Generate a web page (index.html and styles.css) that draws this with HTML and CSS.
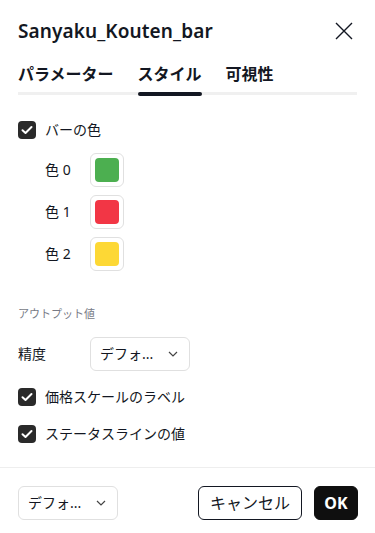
FILE: index.html
```html
<!DOCTYPE html>
<html lang="ja">
<head>
<meta charset="utf-8">
<title>Sanyaku_Kouten_bar</title>
<link rel="stylesheet" href="styles.css">
</head>
<body>
<div class="dialog">
  <header class="header">
    <h1 class="title">Sanyaku_Kouten_bar</h1>
    <button class="close" aria-label="閉じる">
      <svg width="18" height="18" viewBox="0 0 18 18"><path d="M1 1L17 17M17 1L1 17" stroke="#131722" stroke-width="1.4" fill="none"/></svg>
    </button>
  </header>
  <nav class="tabs">
    <div class="tab">パラメーター</div>
    <div class="tab active">スタイル</div>
    <div class="tab">可視性</div>
  </nav>
  <main class="content">
    <label class="check-row first">
      <span class="checkbox"><svg width="12" height="10" viewBox="0 0 12 10"><path d="M1.5 5.2L4.5 8L10.5 2" stroke="#fff" stroke-width="2" fill="none" stroke-linecap="round" stroke-linejoin="round"/></svg></span>
      <span class="label">バーの色</span>
    </label>
    <div class="color-rows">
      <div class="color-row"><span class="color-label">色 0</span><span class="swatch"><span class="swatch-fill green"></span></span></div>
      <div class="color-row"><span class="color-label">色 1</span><span class="swatch"><span class="swatch-fill red"></span></span></div>
      <div class="color-row"><span class="color-label">色 2</span><span class="swatch"><span class="swatch-fill yellow"></span></span></div>
    </div>
    <div class="section-title">アウトプット値</div>
    <div class="field-row">
      <span class="field-label">精度</span>
      <div class="select">
        <span class="select-text">デフォ...</span>
        <svg class="chev" width="10" height="6" viewBox="0 0 10 6"><path d="M1 1L5 5L9 1" stroke="#444" stroke-width="1.2" fill="none"/></svg>
      </div>
    </div>
    <label class="check-row second">
      <span class="checkbox"><svg width="12" height="10" viewBox="0 0 12 10"><path d="M1.5 5.2L4.5 8L10.5 2" stroke="#fff" stroke-width="2" fill="none" stroke-linecap="round" stroke-linejoin="round"/></svg></span>
      <span class="label">価格スケールのラベル</span>
    </label>
    <label class="check-row third">
      <span class="checkbox"><svg width="12" height="10" viewBox="0 0 12 10"><path d="M1.5 5.2L4.5 8L10.5 2" stroke="#fff" stroke-width="2" fill="none" stroke-linecap="round" stroke-linejoin="round"/></svg></span>
      <span class="label">ステータスラインの値</span>
    </label>
  </main>
  <footer class="footer">
    <div class="select">
      <span class="select-text">デフォ...</span>
      <svg class="chev" width="10" height="6" viewBox="0 0 10 6"><path d="M1 1L5 5L9 1" stroke="#444" stroke-width="1.2" fill="none"/></svg>
    </div>
    <div class="buttons">
      <button class="btn cancel">キャンセル</button>
      <button class="btn ok">OK</button>
    </div>
  </footer>
</div>
</body>
</html>
```

FILE: styles.css
```css
* { box-sizing: border-box; }
html, body { margin: 0; padding: 0; background: #fff; }
body {
  font-family: "Noto Sans", "Noto Sans CJK JP", sans-serif;
  color: #131722;
  width: 375px;
  height: 533px;
  overflow: hidden;
}
.dialog { display: flex; flex-direction: column; height: 533px; }
.header {
  height: 62px;
  display: flex;
  align-items: center;
  justify-content: space-between;
  padding: 0 22px 0 18px;
}
.title {
  margin: 0;
  font-size: 19px;
  font-weight: 600;
  line-height: 24px;
  letter-spacing: 0.1px;
}
.close {
  border: 0;
  background: none;
  padding: 0;
  width: 18px;
  height: 18px;
  display: flex;
}
.tabs {
  margin: 0 18px;
  display: flex;
  gap: 24px;
  border-bottom: 3px solid #f0f0f0;
}
.tab {
  position: relative;
  font-size: 16px;
  font-weight: 700;
  line-height: 24px;
  padding-bottom: 6px;
}
.tab.active::after {
  content: "";
  position: absolute;
  left: 0;
  right: 0;
  bottom: -4px;
  height: 4px;
  border-radius: 2px;
  background: #131722;
}
.content {
  padding: 18px 18px 0;
  display: flex;
  flex-direction: column;
}
.check-row {
  display: flex;
  align-items: center;
  gap: 9px;
}
.check-row.first { height: 34px; }
.check-row.second { height: 28px; margin-top: 12px; }
.check-row.third { height: 28px; margin-top: 9px; }
.checkbox {
  width: 18px;
  height: 18px;
  border-radius: 4px;
  background: #2a2a2a;
  display: flex;
  align-items: center;
  justify-content: center;
}
.label { font-size: 14px; line-height: 20px; }
.color-rows {
  margin-top: 6px;
  padding-left: 27px;
  display: flex;
  flex-direction: column;
  gap: 8px;
}
.color-row { display: flex; align-items: center; height: 34px; }
.color-label { width: 45px; font-size: 14px; line-height: 20px; }
.swatch {
  width: 34px;
  height: 34px;
  border: 1px solid #e0e0e0;
  border-radius: 6px;
  padding: 4px;
  display: flex;
}
.swatch-fill { flex: 1; border-radius: 4px; }
.green { background: #4caf50; }
.red { background: #f23645; }
.yellow { background: #fdd835; }
.section-title {
  margin-top: 35px;
  font-size: 11px;
  line-height: 16px;
  color: #787b86;
}
.field-row {
  margin-top: 15px;
  display: flex;
  align-items: center;
  height: 34px;
}
.field-label { width: 72px; font-size: 14px; line-height: 20px; }
.select {
  width: 100px;
  height: 34px;
  border: 1px solid #e0e0e0;
  border-radius: 6px;
  display: flex;
  align-items: center;
  justify-content: space-between;
  padding: 0 11px 0 9px;
}
.select-text { font-size: 14px; line-height: 20px; }
.footer {
  margin-top: auto;
  border-top: 1px solid #eeeeee;
  padding: 18px 17px 13px 18px;
  display: flex;
  justify-content: space-between;
  align-items: center;
}
.buttons { display: flex; gap: 12px; }
.btn {
  height: 34px;
  border-radius: 6px;
  font-family: "Noto Sans", "Noto Sans CJK JP", sans-serif;
  font-size: 16px;
  line-height: 20px;
  padding: 0;
}
.cancel {
  width: 104px;
  background: #fff;
  border: 1px solid #131722;
  color: #131722;
}
.ok {
  width: 44px;
  background: #0f0f0f;
  border: 1px solid #0f0f0f;
  color: #fff;
  font-weight: 700;
}
```
